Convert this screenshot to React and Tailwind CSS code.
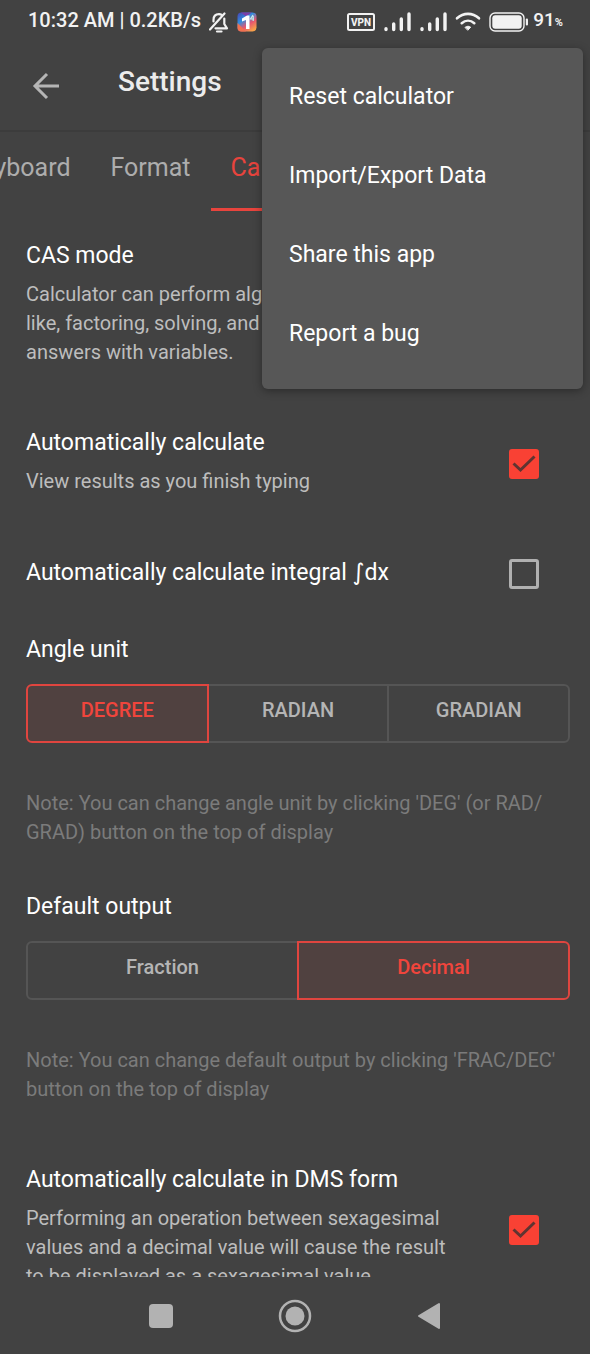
import React, { useState } from "react";

const menuItems = ["Reset calculator", "Import/Export Data", "Share this app", "Report a bug"];

function Signal() {
  return (
    <svg width="27" height="20" viewBox="0 0 27 20" stroke="currentColor" strokeWidth="3.4" strokeLinecap="round">
      <path d="M2 16.8v.8M9.7 12v5.6M17.3 7v10.6M25 2v15.6" />
    </svg>
  );
}

function StatusBar() {
  return (
    <div className="flex h-[42px] items-center pl-7 pr-[27px] pb-[2px] text-[#f2f2f2]">
      <span className="whitespace-nowrap text-[20px] font-medium">10:32 AM | 0.2KB/s</span>
      <svg className="ml-2 mt-1 shrink-0" width="20" height="21" viewBox="0 0 20 21" fill="none" stroke="currentColor" strokeWidth="2.2" strokeLinecap="round" strokeLinejoin="round">
        <path d="M1 17.5 15.5 1.5" />
        <path d="M4.500 9.500V8C4.500 4.500 6.500 2.200 10 2.200c1 0 1.800.2 2.500.6M15.300 6.500v5.500l2.700 4.300H6.500" />
        <path d="M8 19.500h4.500" />
      </svg>
      <svg className="ml-2 mt-1 shrink-0" width="20" height="20" viewBox="0 0 20 20">
        <defs>
          <linearGradient id="appBg" x1="0" y1="0" x2=".7" y2="1">
            <stop offset="0" stopColor="#4a3fb0" />
            <stop offset="0.4" stopColor="#2f8fe0" />
            <stop offset="0.7" stopColor="#e8566f" />
            <stop offset="1" stopColor="#f7a04a" />
          </linearGradient>
        </defs>
        <rect width="19" height="19" x=".5" y=".5" rx="4" fill="url(#appBg)" />
        <path d="M.5 11v4.500a4 4 0 0 0 4 4H9z" fill="#f0714f" />
        <path d="M4 .5h11l-6 4z" fill="#7b3fa8" />
        <path d="M5 6.500 10 3.500h2.500v13.500H9V8l-4 1.500z" fill="#fff" />
        <path d="M16 3 13.500 7h3.500M16.200 4v5" stroke="#bff0ee" strokeWidth="1.200" fill="none" />
      </svg>

      <div className="ml-auto flex items-center">
        <svg className="mt-1" width="28" height="18" viewBox="0 0 28 18">
          <rect x="1" y="1" width="26" height="16" rx="1.500" fill="none" stroke="currentColor" strokeWidth="2" />
          <text x="14" y="12.800" textAnchor="middle" fontSize="10" fontWeight="800" fill="currentColor">VPN</text>
        </svg>
        <span className="ml-[9px] mt-1"><Signal /></span>
        <span className="ml-[9px] mt-1"><Signal /></span>
        <svg className="ml-2 mt-1" width="26" height="20" viewBox="0 0 26 20" fill="none" stroke="currentColor" strokeWidth="2.600" strokeLinecap="round">
          <path d="M2 6.300C8.500.4 17.500.4 24 6.300" />
          <path d="M6.700 11.200c3.800-3.300 8.800-3.300 12.600 0" />
          <path d="M10.300 15.200c1.800-1.300 3.600-1.300 5.400 0L13 18z" fill="currentColor" strokeWidth="1" />
        </svg>
        <svg className="ml-2 mt-1" width="40" height="20" viewBox="0 0 40 20">
          <rect x="1" y="1" width="34" height="18" rx="5" fill="none" stroke="currentColor" strokeWidth="1.400" />
          <rect x="3.300" y="3.300" width="29.400" height="13.400" rx="3" fill="currentColor" />
          <rect x="36.800" y="6.500" width="2.200" height="7" rx="1" fill="currentColor" />
        </svg>
        <span className="ml-1 text-[19px] font-medium">91</span>
        <span className="mt-[6px] text-[11px] font-bold">%</span>
      </div>
    </div>
  );
}

function SettingRow({ id, title, description, defaultChecked }) {
  const [checked, setChecked] = useState(defaultChecked);

  return (
    <div className="flex items-center justify-between pl-[26px] pr-[51px]">
      <label htmlFor={id} className="max-w-[440px]">
        <span className="block text-[23px] leading-[29px] text-white">{title}</span>
        {description && (
          <span className="mt-[10px] block text-[20px] leading-[29px] text-[#bdbdbd]">{description}</span>
        )}
      </label>
      <span className="relative mt-1 size-[30px] shrink-0">
        <input
          id={id}
          type="checkbox"
          checked={checked}
          onChange={(e) => setChecked(e.target.checked)}
          className="block size-[30px] appearance-none rounded-[3px] border-3 border-[#b0b0b0] checked:border-[#f94134] checked:bg-[#f94134]"
        />
        {checked && (
          <svg className="pointer-events-none absolute inset-0" width="30" height="30" viewBox="0 0 30 30" fill="none" stroke="#5f3431" strokeWidth="3">
            <path d="M4.500 14.500 11.500 21 25.500 7.500" />
          </svg>
        )}
      </span>
    </div>
  );
}

function SegmentedSetting({ title, options, initial, note }) {
  const [selected, setSelected] = useState(initial);

  return (
    <section className="pl-[26px] pr-5">
      <h2 className="text-[23px] leading-[29px] text-white">{title}</h2>
      <div className="mt-5 flex h-[59px]">
        {options.map((option) => (
          <button
            key={option}
            onClick={() => setSelected(option)}
            className={`flex-1 border-2 pb-[7px] text-[20px] font-medium not-first:-ml-[2px] first:rounded-l-md last:rounded-r-md ${
              option === selected
                ? "relative border-[#e0453f] bg-[#504140] text-[#f0453c]"
                : "border-[#555555] text-[#b5b5b5]"
            }`}
          >
            {option}
          </button>
        ))}
      </div>
      <p className="mt-[46px] text-[20px] leading-[29px] text-[#7b7b7b]">{note}</p>
    </section>
  );
}

export default function App() {
  return (
    <div className="relative flex h-screen flex-col overflow-hidden bg-[#424242] font-['Roboto',sans-serif]">
      <StatusBar />

      <header className="flex h-[90px] shrink-0 items-center border-b-2 border-[#3c3c3c] pl-8">
        <button aria-label="Back" className="text-[#b5b5b5]">
          <svg width="28" height="28" viewBox="0 0 28 28" fill="none" stroke="currentColor" strokeWidth="3">
            <path d="M27 14H3M15 2 3 14l12 12" />
          </svg>
        </button>
        <h1 className="ml-[58px] pb-2 text-[28px] font-medium text-[#ececec]">Settings</h1>
      </header>

      <nav className="-ml-[54px] flex h-[79px] shrink-0 text-[25px] text-[#adadad]">
        <button className="border-b-3 border-transparent px-5 pb-1">Keyboard</button>
        <button className="border-b-3 border-transparent px-5 pb-1">Format</button>
        <button className="border-b-3 border-[#e8443d] px-5 pb-1 text-[#e8443d]">Calculate</button>
      </nav>

      <main className="flex min-h-0 flex-1 flex-col overflow-hidden pt-[30px] *:shrink-0">
        <SettingRow
          id="cas"
          title="CAS mode"
          description="Calculator can perform algebraic computations like, factoring, solving, and returning exact answers with variables."
          defaultChecked
        />
        <div className="mt-[61px]">
          <SettingRow id="auto" title="Automatically calculate" description="View results as you finish typing" defaultChecked />
        </div>
        <div className="mt-[59px]">
          <SettingRow
            id="integral"
            title={<>Automatically calculate integral <span className="font-['DejaVu_Sans']">∫</span>dx</>}
            defaultChecked={false}
          />
        </div>
        <div className="mt-[46px]">
          <SegmentedSetting
            title="Angle unit"
            options={["DEGREE", "RADIAN", "GRADIAN"]}
            initial="DEGREE"
            note="Note: You can change angle unit by clicking 'DEG' (or RAD/ GRAD) button on the top of display"
          />
        </div>
        <div className="mt-[45px]">
          <SegmentedSetting
            title="Default output"
            options={["Fraction", "Decimal"]}
            initial="Decimal"
            note="Note: You can change default output by clicking 'FRAC/DEC' button on the top of display"
          />
        </div>
        <div className="mt-[61px]">
          <SettingRow
            id="dms"
            title="Automatically calculate in DMS form"
            description="Performing an operation between sexagesimal values and a decimal value will cause the result to be displayed as a sexagesimal value."
            defaultChecked
          />
        </div>
      </main>

      <footer className="flex h-[77px] shrink-0 items-center justify-center gap-[103px] text-[#b2b2b2]">
        <button aria-label="Recent apps" className="flex w-7 justify-center">
          <svg width="24" height="24" viewBox="0 0 24 24">
            <rect width="24" height="24" rx="4" fill="currentColor" />
          </svg>
        </button>
        <button aria-label="Home">
          <svg width="34" height="34" viewBox="0 0 34 34">
            <circle cx="17" cy="17" r="15" fill="none" stroke="currentColor" strokeWidth="2.500" />
            <circle cx="17" cy="17" r="9.500" fill="currentColor" />
          </svg>
        </button>
        <button aria-label="Navigate back" className="flex w-7 justify-center">
          <svg width="24" height="28" viewBox="0 0 24 28">
            <path d="M22 2v24L2 14z" fill="currentColor" stroke="currentColor" strokeWidth="2" strokeLinejoin="round" />
          </svg>
        </button>
      </footer>

      {/* overflow menu */}
      <div role="menu" className="absolute right-[7px] top-12 flex w-[321px] flex-col rounded-md bg-[#575757] pt-[10px] pb-[15px] shadow-[0_2px_8px_rgba(0,0,0,0.35)]">
        {menuItems.map((item) => (
          <button key={item} role="menuitem" className="h-[79px] px-[27px] text-left text-[23px] text-white">
            {item}
          </button>
        ))}
      </div>
    </div>
  );
}
